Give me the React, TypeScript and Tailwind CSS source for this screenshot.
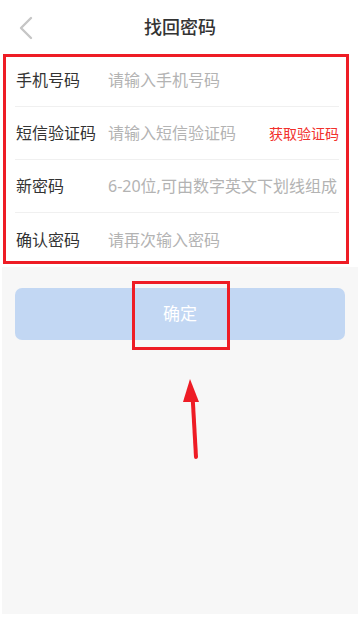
const rows = [
  { label: "手机号码", placeholder: "请输入手机号码" },
  { label: "短信验证码", placeholder: "请输入短信验证码", action: "获取验证码" },
  { label: "新密码", placeholder: "6-20位,可由数字英文下划线组成" },
  { label: "确认密码", placeholder: "请再次输入密码" },
];

export default function App() {
  return (
    <div
      className="relative w-[360px] h-[617px] bg-white overflow-hidden flex flex-col"
      style={{ fontFamily: '"Noto Sans", "Noto Sans CJK SC", sans-serif' }}
    >
      {/* header */}
      <div className="relative h-[54px] flex items-center justify-center shrink-0">
        <svg className="absolute left-[16px] top-[15px]" width="20" height="26" viewBox="0 0 20 26">
          <polyline
            points="15,3 5,13 15,23"
            fill="none"
            stroke="#c6c6c6"
            strokeWidth="2.4"
            strokeLinecap="round"
            strokeLinejoin="round"
          />
        </svg>
        <h1 className="text-[18px] font-medium text-[#333]">找回密码</h1>
      </div>

      {/* form */}
      <div className="relative shrink-0">
        {rows.map((row, i) => (
          <div key={row.label} className="h-[53px] flex items-center pl-[15px] pr-[21px]">
            <div
              className={`h-full flex-1 flex items-center ${
                i < rows.length - 1 ? "border-b border-[#f0f0f0]" : ""
              }`}
            >
              <span className="w-[93px] pl-px text-[16px] text-[#333] shrink-0">{row.label}</span>
              <span className="flex-1 text-[16px] text-[#b3b3b3] whitespace-nowrap">
                {row.placeholder}
              </span>
              {row.action && (
                <span className="text-[14px] text-[#f2302b] whitespace-nowrap">{row.action}</span>
              )}
            </div>
          </div>
        ))}
        {/* annotation box */}
        <div className="absolute left-[3px] top-0 w-[346px] h-[210px] border-[3px] border-[#ee1c25] pointer-events-none" />
      </div>

      {/* bottom area */}
      <div className="relative flex-1 mx-[2px] mt-[1px] mb-[3px] bg-[#f7f7f7] pt-[21px] px-[13px]">
        <button className="w-full h-[52px] rounded-[7px] bg-[#c2d7f3] text-white text-[17px]">
          确定
        </button>
        {/* annotation box around button */}
        <div className="absolute left-[130px] top-[14px] w-[98px] h-[69px] border-[3px] border-[#ee1c25] pointer-events-none" />
        {/* annotation arrow */}
        <svg
          className="absolute left-[178px] top-[108px]"
          width="24"
          height="84"
          viewBox="0 0 24 84"
        >
          <line x1="12.5" y1="20" x2="16" y2="82" stroke="#ee1c25" strokeWidth="4" strokeLinecap="round" />
          <polygon points="10,4 3,27 19,27" fill="#ee1c25" />
        </svg>
      </div>
    </div>
  );
}
